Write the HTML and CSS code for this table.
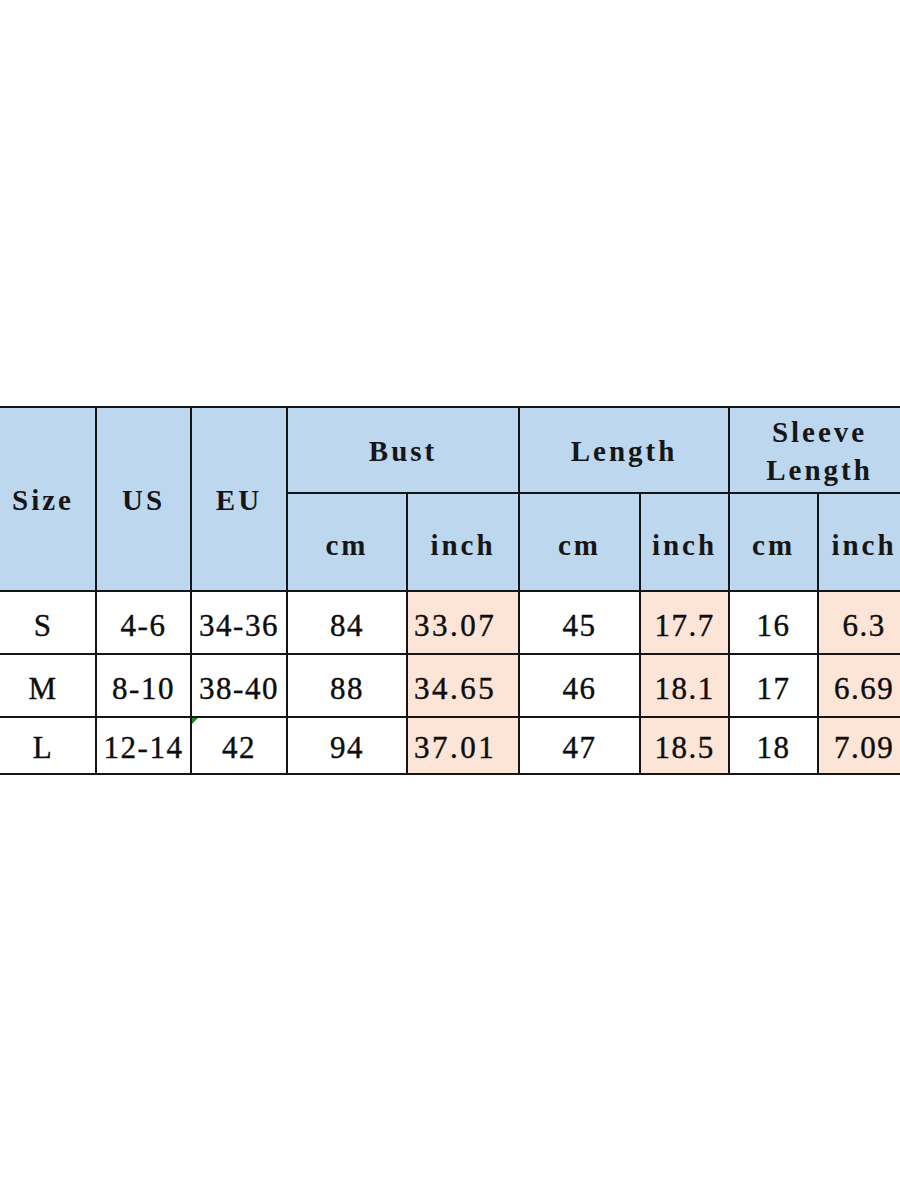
FILE: index.html
```html
<!DOCTYPE html>
<html lang="en">
<head>
<meta charset="utf-8">
<title>Size Chart</title>
<link rel="stylesheet" href="styles.css">
</head>
<body>
<div class="chart">
  <table class="size-table">
    <colgroup>
      <col class="c-size">
      <col class="c-us">
      <col class="c-eu">
      <col class="c-bust-cm">
      <col class="c-bust-in">
      <col class="c-len-cm">
      <col class="c-len-in">
      <col class="c-sl-cm">
      <col class="c-sl-in">
    </colgroup>
    <thead>
      <tr class="head-top">
        <th rowspan="2">Size</th>
        <th rowspan="2">US</th>
        <th rowspan="2">EU</th>
        <th colspan="2">Bust</th>
        <th colspan="2">Length</th>
        <th colspan="2" class="wrap">Sleeve<br>Length</th>
      </tr>
      <tr class="head-sub">
        <th>cm</th>
        <th>inch</th>
        <th>cm</th>
        <th>inch</th>
        <th>cm</th>
        <th>inch</th>
      </tr>
    </thead>
    <tbody>
      <tr class="row">
        <td>S</td>
        <td>4-6</td>
        <td>34-36</td>
        <td>84</td>
        <td class="inch left">33.07</td>
        <td>45</td>
        <td class="inch">17.7</td>
        <td>16</td>
        <td class="inch">6.3</td>
      </tr>
      <tr class="row">
        <td>M</td>
        <td>8-10</td>
        <td>38-40</td>
        <td>88</td>
        <td class="inch left">34.65</td>
        <td>46</td>
        <td class="inch">18.1</td>
        <td>17</td>
        <td class="inch">6.69</td>
      </tr>
      <tr class="row last">
        <td>L</td>
        <td>12-14</td>
        <td class="flag">42</td>
        <td>94</td>
        <td class="inch left">37.01</td>
        <td>47</td>
        <td class="inch">18.5</td>
        <td>18</td>
        <td class="inch">7.09</td>
      </tr>
    </tbody>
  </table>
</div>
</body>
</html>
```

FILE: styles.css
```css
html, body {
  margin: 0;
  padding: 0;
  background: #ffffff;
}

body {
  width: 900px;
  height: 1200px;
  overflow: hidden;
  font-family: "Liberation Serif", "Times New Roman", serif;
  color: #111111;
}

.chart {
  padding-top: 406px;
  margin-left: -11px;
}

.size-table {
  border-collapse: collapse;
  table-layout: fixed;
  width: 920px;
}

.c-size { width: 106px; }
.c-us { width: 95px; }
.c-eu { width: 96px; }
.c-bust-cm { width: 120px; }
.c-bust-in { width: 112px; }
.c-len-cm { width: 121px; }
.c-len-in { width: 89px; }
.c-sl-cm { width: 89px; }
.c-sl-in { width: 92px; }

.size-table th,
.size-table td {
  border: 2px solid #151515;
  padding: 0;
  text-align: center;
  vertical-align: middle;
  white-space: nowrap;
}

.size-table th {
  background: #bdd7ee;
  font-weight: bold;
  font-size: 29px;
  letter-spacing: 3px;
  line-height: 38px;
  color: #161616;
}

.head-top { height: 86px; }
.head-sub { height: 98px; }

.head-top th { padding-top: 2px; }
.head-sub th { padding-top: 6px; }

.size-table td {
  background: #ffffff;
  font-size: 31px;
  letter-spacing: 1.5px;
  padding-top: 6px;
  line-height: 40px;
  color: #0d0d0d;
  -webkit-text-stroke: 0.4px #0d0d0d;
}

.row { height: 63px; }
.row.last { height: 57px; }
.row.last td { padding-top: 4px; }

.size-table td.inch {
  background: #fce4d6;
}

.size-table td.left {
  text-align: left;
  padding-left: 6px;
  letter-spacing: 2.5px;
}

.size-table td.flag {
  position: relative;
}

.size-table td.flag::before {
  content: "";
  position: absolute;
  top: 0;
  left: 0;
  width: 0;
  height: 0;
  border-top: 6px solid #1a8a2a;
  border-right: 6px solid transparent;
}
```
